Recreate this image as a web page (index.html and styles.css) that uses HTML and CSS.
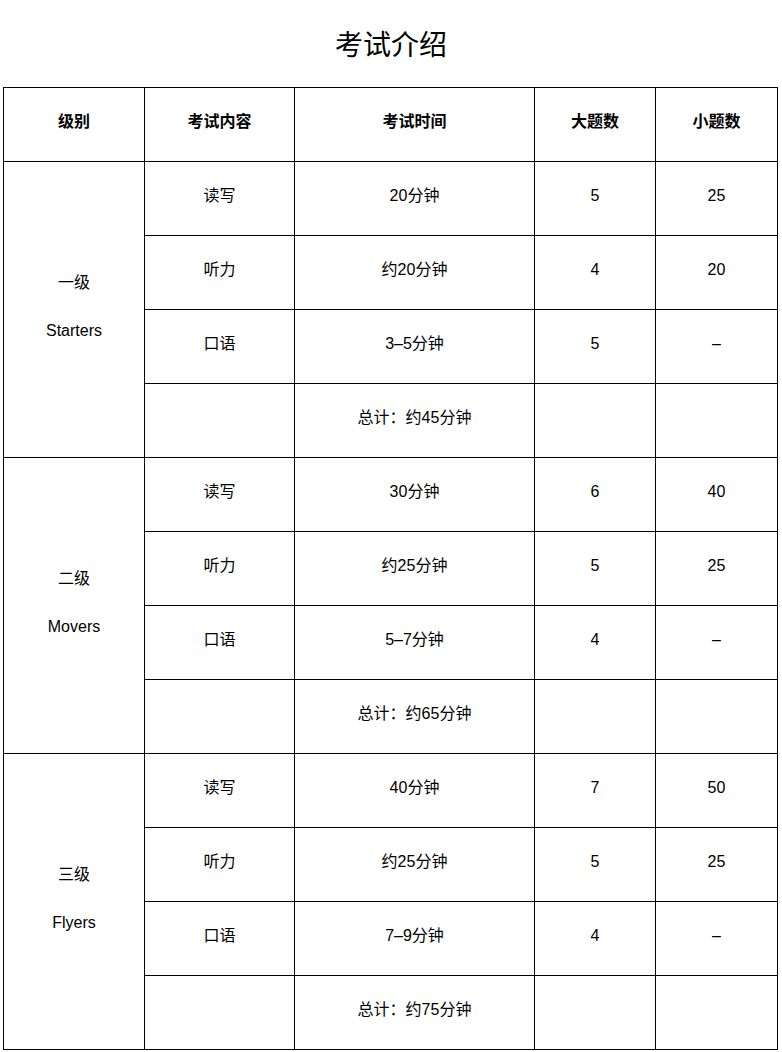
FILE: index.html
```html
<!DOCTYPE html>
<html lang="zh">
<head>
<meta charset="utf-8">
<title>考试介绍</title>
<link rel="stylesheet" href="styles.css">
</head>
<body>
<h1 class="title">考试介绍</h1>
<table class="exam">
  <colgroup>
    <col class="c1"><col class="c2"><col class="c3"><col class="c4"><col class="c5">
  </colgroup>
  <thead>
    <tr><th>级别</th><th>考试内容</th><th>考试时间</th><th>大题数</th><th>小题数</th></tr>
  </thead>
  <tbody>
    <tr><td rowspan="4"><div class="level"><span>一级</span><span>Starters</span></div></td><td>读写</td><td>20分钟</td><td>5</td><td>25</td></tr>
    <tr><td>听力</td><td>约20分钟</td><td>4</td><td>20</td></tr>
    <tr><td>口语</td><td>3–5分钟</td><td>5</td><td>–</td></tr>
    <tr><td></td><td>总计：约45分钟</td><td></td><td></td></tr>
    <tr><td rowspan="4"><div class="level"><span>二级</span><span>Movers</span></div></td><td>读写</td><td>30分钟</td><td>6</td><td>40</td></tr>
    <tr><td>听力</td><td>约25分钟</td><td>5</td><td>25</td></tr>
    <tr><td>口语</td><td>5–7分钟</td><td>4</td><td>–</td></tr>
    <tr><td></td><td>总计：约65分钟</td><td></td><td></td></tr>
    <tr><td rowspan="4"><div class="level"><span>三级</span><span>Flyers</span></div></td><td>读写</td><td>40分钟</td><td>7</td><td>50</td></tr>
    <tr><td>听力</td><td>约25分钟</td><td>5</td><td>25</td></tr>
    <tr><td>口语</td><td>7–9分钟</td><td>4</td><td>–</td></tr>
    <tr><td></td><td>总计：约75分钟</td><td></td><td></td></tr>
  </tbody>
</table>
</body>
</html>
```
FILE: styles.css
```css
html, body {
  margin: 0;
  padding: 0;
  background: #fff;
}
body {
  font-family: "Liberation Sans", "Noto Sans CJK SC", sans-serif;
  color: #000;
}
.title {
  margin: 26px 0 21px;
  font-size: 28px;
  line-height: 40px;
  font-weight: normal;
  text-align: center;
}
.exam {
  margin-left: 3px;
  width: 774px;
  border-collapse: collapse;
  table-layout: fixed;
}
.c1 { width: 141px; }
.c2 { width: 150px; }
.c3 { width: 240px; }
.c4 { width: 121px; }
.c5 { width: 122px; }
.exam th, .exam td {
  border: 1px solid #000;
  height: 74px;
  padding: 0 0 6px;
  box-sizing: border-box;
  text-align: center;
  vertical-align: middle;
  font-size: 16px;
  line-height: 24px;
}
.exam th {
  font-weight: bold;
}
.level {
  display: flex;
  flex-direction: column;
  align-items: center;
  gap: 24px;
}
```
